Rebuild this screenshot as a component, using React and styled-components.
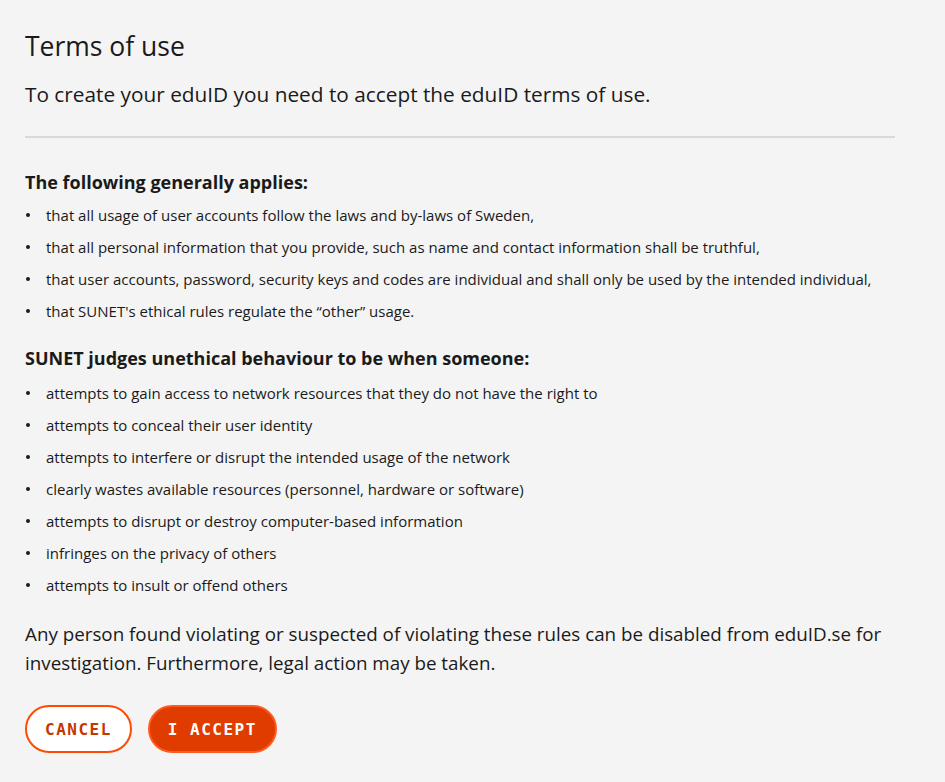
import React from 'react';
import styled, { createGlobalStyle } from 'styled-components';

const GlobalStyle = createGlobalStyle`
  html, body {
    margin: 0;
    padding: 0;
    background: #f4f4f4;
  }
  body {
    font-family: "Open Sans", "Liberation Sans", sans-serif;
    color: #1a1a1a;
  }
`;

const Page = styled.main`
  width: 870px;
  padding: 25px 25px 28px 25px;
`;

const Title = styled.h1`
  font-size: 26.5px;
  font-weight: 400;
  line-height: 42px;
  margin: 0;
`;

const Lead = styled.p`
  font-size: 20.8px;
  line-height: 30px;
  margin: 12px 0 0 0;
`;

const Divider = styled.hr`
  border: none;
  height: 2px;
  background: #d9d9d9;
  margin: 27px 0 29px 0;
`;

const Heading = styled.h2`
  font-size: 18px;
  font-weight: 700;
  line-height: 30px;
  margin: ${(p) => (p.$first ? '0' : '16px 0 4px 0')};
`;

const List = styled.ul`
  list-style: none;
  margin: 2px 0 0 0;
  padding: 0;
`;

const Item = styled.li`
  display: flex;
  align-items: center;
  gap: 16px;
  font-size: 15px;
  line-height: 32px;
  &::before {
    content: '';
    width: 4px;
    height: 4px;
    margin-left: 1px;
    border-radius: 50%;
    background: #1a1a1a;
    flex-shrink: 0;
  }
`;

const Notice = styled.p`
  font-size: 18.8px;
  font-weight: 500;
  line-height: 29px;
  margin: 19px 0 0 0;
`;

const Actions = styled.div`
  display: flex;
  gap: 16px;
  margin-top: 27px;
`;

const Button = styled.button`
  height: 48px;
  padding: 0 18px;
  border-radius: 24px;
  border: 2px solid ${(p) => (p.$primary ? '#ff5a1f' : '#ff4b00')};
  background: ${(p) => (p.$primary ? '#e03c00' : '#ffffff')};
  color: ${(p) => (p.$primary ? '#ffffff' : '#c43700')};
  font-family: "DejaVu Sans Mono", "Liberation Mono", monospace;
  font-weight: 700;
  font-size: 16px;
  letter-spacing: 1.5px;
  cursor: pointer;
`;

const general = [
  'that all usage of user accounts follow the laws and by-laws of Sweden,',
  'that all personal information that you provide, such as name and contact information shall be truthful,',
  'that user accounts, password, security keys and codes are individual and shall only be used by the intended individual,',
  "that SUNET's ethical rules regulate the \u201cother\u201d usage.",
];

const unethical = [
  'attempts to gain access to network resources that they do not have the right to',
  'attempts to conceal their user identity',
  'attempts to interfere or disrupt the intended usage of the network',
  'clearly wastes available resources (personnel, hardware or software)',
  'attempts to disrupt or destroy computer-based information',
  'infringes on the privacy of others',
  'attempts to insult or offend others',
];

export default function App() {
  return (
    <>
      <GlobalStyle />
      <Page>
        <Title>Terms of use</Title>
        <Lead>To create your eduID you need to accept the eduID terms of use.</Lead>
        <Divider />
        <Heading $first>The following generally applies:</Heading>
        <List>
          {general.map((t) => (
            <Item key={t}>{t}</Item>
          ))}
        </List>
        <Heading>SUNET judges unethical behaviour to be when someone:</Heading>
        <List>
          {unethical.map((t) => (
            <Item key={t}>{t}</Item>
          ))}
        </List>
        <Notice>
          Any person found violating or suspected of violating these rules can be disabled from eduID.se for
          investigation. Furthermore, legal action may be taken.
        </Notice>
        <Actions>
          <Button>CANCEL</Button>
          <Button $primary>I ACCEPT</Button>
        </Actions>
      </Page>
    </>
  );
}
